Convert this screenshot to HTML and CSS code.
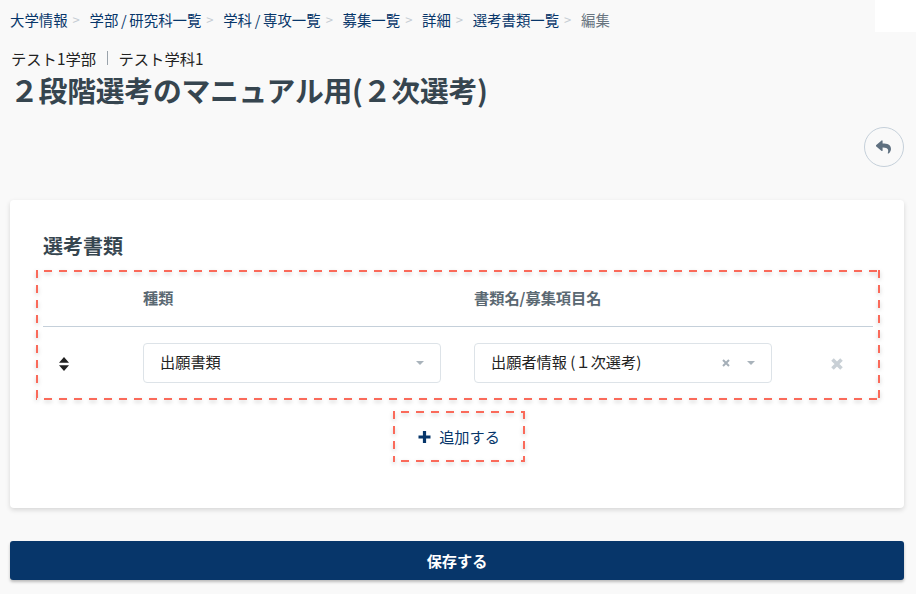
FILE: index.html
```html
<!DOCTYPE html>
<html lang="ja">
<head>
<meta charset="utf-8">
<title>選考書類</title>
<link rel="stylesheet" href="styles.css">
</head>
<body>
<div class="corner"></div>
<nav class="crumbs">
  <a>大学情報</a><span class="sep">&gt;</span>
  <a>学部 / 研究科一覧</a><span class="sep">&gt;</span>
  <a>学科 / 専攻一覧</a><span class="sep">&gt;</span>
  <a>募集一覧</a><span class="sep">&gt;</span>
  <a>詳細</a><span class="sep">&gt;</span>
  <a>選考書類一覧</a><span class="sep">&gt;</span>
  <span class="current">編集</span>
</nav>
<p class="sub"><span>テスト1学部</span><i class="bar"></i><span>テスト学科1</span></p>
<h1 class="title">２段階選考のマニュアル用(２次選考)</h1>
<div class="actions">
  <button class="back" aria-label="戻る">
    <svg width="16" height="14" viewBox="0 0 16 14"><path fill="#5f7080" d="M0 5.200 5.600.4c.4-.3 1-.1 1 .5v2.600c4.600 .1 8.400 1 8.400 5.500 0 1.800-1.100 3.600-2.400 4.500-.4.300-1 0-.8-.5 1.300-4.200-.6-5.300-5.200-5.400v2.800c0 .6-.6.800-1 .5L0 6.300c-.3-.3-.3-.8 0-1.100z"/></svg>
  </button>
</div>
<section class="card">
  <h2 class="card-title">選考書類</h2>
  <div class="dashed table">
    <div class="row head">
      <div class="c-handle"></div>
      <div class="c-type">種類</div>
      <div class="c-name">書類名/募集項目名</div>
      <div class="c-del"></div>
    </div>
    <div class="row body">
      <div class="c-handle">
        <svg width="10" height="14" viewBox="0 0 10 14"><path fill="#222" d="M5 0 10 5.800H0zM5 14 0 8.200h10z"/></svg>
      </div>
      <div class="c-type">
        <div class="select"><span class="val">出願書類</span><i class="caret"></i></div>
      </div>
      <div class="c-name">
        <div class="select"><span class="val">出願者情報 (１次選考)</span>
          <svg class="clear" width="8" height="8" viewBox="0 0 8 8"><path stroke="#a5afb8" stroke-width="2" d="M1 1l6 6M7 1 1 7"/></svg>
          <i class="caret"></i></div>
      </div>
      <div class="c-del">
        <svg width="12" height="12" viewBox="0 0 12 12"><path stroke="#c9d0d6" stroke-width="3.600" d="M1.500 1.500l9 9M10.500 1.500l-9 9"/></svg>
      </div>
    </div>
  </div>
  <div class="add-wrap">
    <button class="dashed add">
      <svg width="13" height="12" viewBox="0 0 13 12"><path stroke="#07366a" stroke-width="3.200" d="M6.500 0v12M.5 6h12"/></svg>
      <span class="add-label">追加する</span>
    </button>
  </div>
</section>
<button class="save"><span class="save-label">保存する</span></button>
</body>
</html>
```
FILE: styles.css
```css
* { box-sizing: border-box; }
html, body { margin: 0; padding: 0; }
body {
  height: 594px;
  overflow: hidden;
  position: relative;
  background: #f9f9f9;
  padding: 0 12px 0 10px;
  font-family: "Noto Sans CJK JP", "Noto Sans", sans-serif;
  color: #222;
}
.corner { position: absolute; top: 0; right: 0; width: 41px; height: 32px; background: #fff; }
.crumbs {
  display: flex;
  align-items: center;
  height: 38px;
  font-size: 14.400px;
  word-spacing: -.5px;
  color: #07366a;
  white-space: nowrap;
}
.sep { color: #c5ccd3; margin: 0 9.700px 0 5px; font-size: 13px; }
.current { color: #68747f; }
.sub {
  display: flex;
  align-items: center;
  margin: 9px 0 0 1px;
  height: 22px;
  font-size: 15.300px;
  color: #222;
}
.bar { width: 1px; height: 14px; background: #9aa3ab; margin: 0 10.500px 0 11px; }
.title {
  margin: 0;
  height: 42px;
  line-height: 42px;
  font-size: 28.800px;
  letter-spacing: -.22px;
  font-weight: 700;
  color: #36454f;
  white-space: nowrap;
}
.actions { display: flex; justify-content: flex-end; margin-top: 16px; height: 73px; }
.back {
  width: 40px;
  height: 40px;
  border-radius: 50%;
  border: 1px solid #c5d0da;
  background: #f9f9f9;
  padding: 0;
  display: flex;
  align-items: center;
  justify-content: center;
}
.card {
  background: #fff;
  border-radius: 4px;
  box-shadow: 0 2px 5px rgba(0,0,0,.14);
  height: 308px;
  padding: 32px 24px 0 26px;
}
.card-title {
  margin: 0 0 0 7px;
  font-size: 20px;
  line-height: 28px;
  font-weight: 700;
  color: #36454f;
}
.dashed { position: relative; }
.dashed::before {
  content: "";
  position: absolute;
  inset: 0;
  pointer-events: none;
  filter: drop-shadow(0 2px 2px rgba(0,0,0,.2));
  background:
    linear-gradient(90deg, #fa6a5a 8px, transparent 8px) 8px 0 / 15px 2px repeat-x,
    linear-gradient(90deg, #fa6a5a 8px, transparent 8px) 8px 100% / 15px 2px repeat-x,
    linear-gradient(#fa6a5a 8px, transparent 8px) 0 0 / 2px 15px repeat-y,
    linear-gradient(#fa6a5a 8px, transparent 8px) 100% 0 / 2px 15px repeat-y;
}
.table { height: 130px; margin-top: 10px; padding: 0 7px; }
.row { display: flex; align-items: center; }
.head { height: 57px; padding-bottom: 2px; border-bottom: 1px solid #c5d0da; font-size: 15.200px; font-weight: 700; color: #5a6872; }
.body { height: 73px; padding-bottom: 2px; }
.c-handle { width: 100px; padding: 2px 0 0 16px; display: flex; }
.c-type { width: 331px; }
.c-name { width: 298px; }
.c-del { margin-left: 59px; padding-top: 2px; display: flex; width: 12px; }
.select {
  width: 298px;
  height: 40px;
  border: 1px solid #dde3e8;
  border-radius: 4px;
  background: #fff;
  display: flex;
  align-items: center;
  padding: 0 16px 0 16px;
  font-size: 15.200px;
  color: #222;
}
.val { flex: 1; padding-bottom: 4px; }
.clear { margin-right: 17px; }
.caret { width: 8px; height: 0; border: 4px solid transparent; border-top: 4px solid #a9b3bb; border-bottom: 0; }
.add-wrap { display: flex; justify-content: center; margin: 11px 0 0 2px; }
.add {
  width: 132px;
  height: 51px;
  border: 0;
  background: transparent;
  font-family: inherit;
  font-size: 15.200px;
  color: #07366a;
  display: flex;
  align-items: center;
  justify-content: center;
  gap: 8px;
  padding: 0;
}
.add-label { padding-bottom: 1px; }
.save {
  display: block;
  width: 100%;
  height: 39px;
  margin-top: 33px;
  padding: 0 0 2px;
  border: 0;
  border-radius: 3px;
  background: #07366a;
  color: #fff;
  font-family: inherit;
  font-size: 15.200px;
  font-weight: 700;
  box-shadow: 0 2px 3px rgba(0,0,0,.25);
}
```
